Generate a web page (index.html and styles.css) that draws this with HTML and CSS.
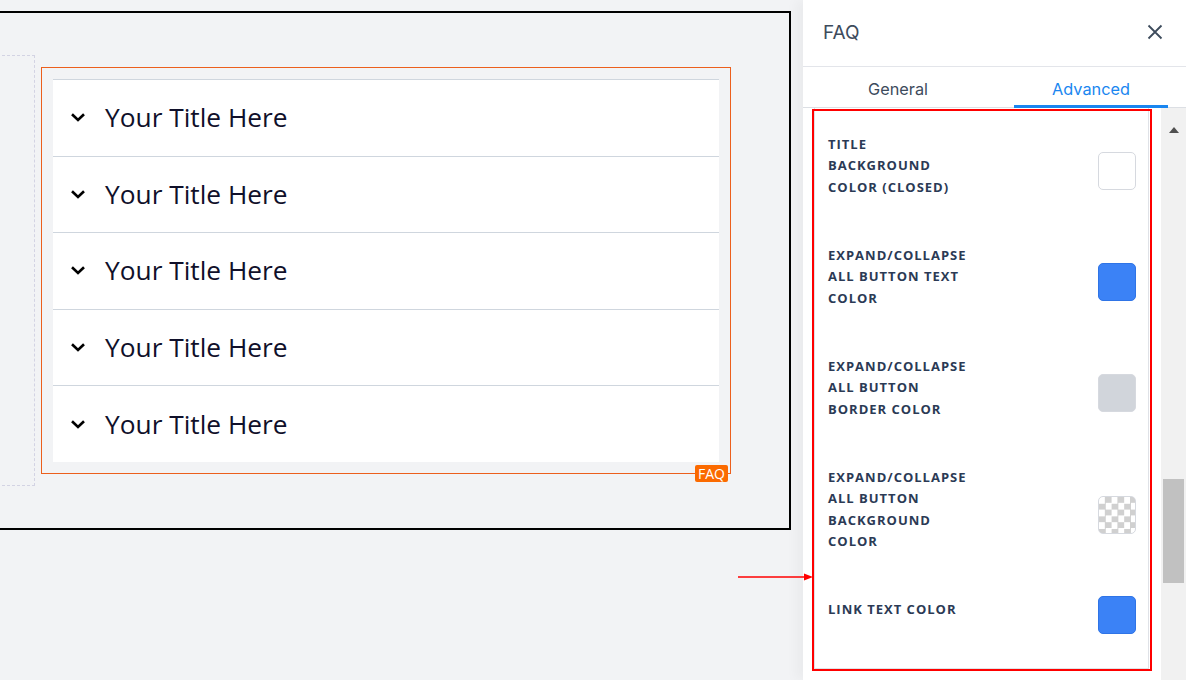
FILE: index.html
```html
<!DOCTYPE html>
<html>
<head>
    <meta charset="UTF-8">
    <title>FAQ - Advanced</title>
    <link rel="stylesheet" href="styles.css">
</head>
<body>
<div class="canvas">
    <div class="frame">
        <div class="ghost"></div>
        <div class="faq-block">
            <ul class="faq">
                <li><em></em><span>Your Title Here</span></li>
                <li><em></em><span>Your Title Here</span></li>
                <li><em></em><span>Your Title Here</span></li>
                <li><em></em><span>Your Title Here</span></li>
                <li><em></em><span>Your Title Here</span></li>
            </ul>
            <i class="tag">FAQ</i>
        </div>
    </div>
</div>

<div class="panel">
    <div class="panel-head">
        <h2>FAQ</h2>
        <svg class="close" width="16" height="16" viewBox="0 0 16 16">
            <path d="M1.5 1.5L14.5 14.5M14.5 1.5L1.5 14.5" stroke="#3d4b5c" stroke-width="1.8" fill="none"/>
        </svg>
    </div>
    <div class="tabs">
        <a class="tab">General</a>
        <a class="tab active">Advanced</a>
    </div>
    <div class="body">
        <div class="scroll">
            <div class="opts">
                <div class="row">
                    <label>Title<br>Background<br>Color (Closed)</label>
                    <b class="swatch white"></b>
                </div>
                <div class="row">
                    <label>Expand/Collapse<br>All Button Text<br>Color</label>
                    <b class="swatch blue"></b>
                </div>
                <div class="row">
                    <label>Expand/Collapse<br>All Button<br>Border Color</label>
                    <b class="swatch gray"></b>
                </div>
                <div class="row">
                    <label>Expand/Collapse<br>All Button<br>Background<br>Color</label>
                    <b class="swatch none"></b>
                </div>
                <div class="row">
                    <label>Link Text Color</label>
                    <b class="swatch blue"></b>
                </div>
            </div>
        </div>
        <div class="bar">
            <s class="up"></s>
            <s class="thumb"></s>
        </div>
    </div>
</div>

<!-- annotation overlay -->
<div class="mark"></div>
<svg class="arrow" width="76" height="10" viewBox="0 0 76 10">
    <path d="M0 5H68" stroke="#ff0000" stroke-width="1.5"/>
    <path d="M66 1.5L75 5L66 8.5Z" fill="#ff0000"/>
</svg>
</body>
</html>
```

FILE: styles.css
```css
* {
    margin: 0;
    padding: 0;
    box-sizing: border-box;
}

ul, li {
    list-style: none;
}

body {
    display: flex;
    height: 680px;
    overflow: hidden;
    background: #f2f3f5;
    font-family: "Open Sans", "Noto Sans", sans-serif;
}

/*左边画布*/
.canvas {
    flex: 1;
    overflow: hidden;
}

.frame {
    display: flex;
    align-items: flex-start;
    margin: 11px 0 0 -20px;
    width: 811px;
    height: 519px;
    border: 2px solid #000;
}

.ghost {
    margin-top: 42px;
    width: 53px;
    height: 431px;
    border: 1px dashed #d3d3e3;
    border-left: 0;
}

.faq-block {
    position: relative;
    margin: 54px 0 0 6px;
    padding: 11px 11px 11px 11px;
    width: 690px;
    height: 407px;
    border: 1px solid #ec5f1c;
}

.faq li {
    display: flex;
    align-items: center;
    height: 76.6px;
    padding-left: 17px;
    background: #fff;
    border-top: 1px solid #cfd6de;
}

.faq em {
    width: 16px;
    height: 10px;
    margin: -1px 19px 0 0;
    background: url("data:image/svg+xml,%3Csvg xmlns='http://www.w3.org/2000/svg' width='16' height='10' viewBox='0 0 16 10'%3E%3Cpath d='M2 2.2L8 8L14 2.2' stroke='%23000' stroke-width='2.6' fill='none'/%3E%3C/svg%3E") no-repeat;
}

.faq span {
    margin-top: -1px;
    font-size: 26.3px;
    color: #10102a;
}

.tag {
    position: absolute;
    right: 2px;
    bottom: -9px;
    padding: 0 3px;
    height: 17px;
    line-height: 17px;
    border-radius: 2px;
    background: #fb6a00;
    color: #fff;
    font-style: normal;
    font-size: 14px;
}

/*右边设置面板*/
.panel {
    display: flex;
    flex-direction: column;
    width: 383px;
    background: #fff;
    box-shadow: -8px 0 10px rgba(0, 0, 0, .03);
    font-family: Inter, "Liberation Sans", sans-serif;
}

.panel-head {
    display: flex;
    align-items: center;
    justify-content: space-between;
    height: 67px;
    padding: 0 23px 2px 20px;
    border-bottom: 1px solid #e3e5ea;
}

.panel-head h2 {
    font-size: 19px;
    font-weight: 400;
    color: #3d4b5c;
}

.tabs {
    display: flex;
    gap: 39px;
    height: 41px;
    padding-left: 18px;
    border-bottom: 1px solid #dcdfe4;
}

.tab {
    width: 154px;
    padding-top: 1px;
    line-height: 42px;
    text-align: center;
    font-size: 16.3px;
    color: #3d4b5c;
}

.tab.active {
    color: #1a86f0;
    border-bottom: 3px solid #1a86f0;
    margin-bottom: -1px;
}

.body {
    flex: 1;
    display: flex;
}

.scroll {
    flex: 1;
    padding: 0 12px 0 11px;
}

.opts {
    height: 561px;
    padding: 2px 12px 0 13px;
    border: 1px solid #dfe2e7;
    border-top: 0;
}

.row {
    display: flex;
    align-items: center;
    justify-content: space-between;
    padding: 23.5px 0 23px;
}

.row label {
    font-family: "Open Sans", sans-serif;
    font-size: 13px;
    font-weight: 700;
    line-height: 21.5px;
    letter-spacing: 1px;
    text-transform: uppercase;
    color: #2b3a55;
}

/*色块不撑高行，只往下偏一点*/
.swatch {
    width: 38px;
    height: 38px;
    margin: -3px 0 -13px;
    border: 1px solid #d6d9df;
    border-radius: 5px;
}

.swatch.white {
    background: #fff;
}

.swatch.blue {
    background: #3b82f6;
    border-color: #2f74e6;
}

.swatch.gray {
    background: #d1d5db;
}

.swatch.none {
    background: repeating-conic-gradient(#d0d0d0 0 25%, #fff 0 50%) 0 0 / 12.6px 12.6px;
}

.bar {
    width: 25px;
    padding: 19px 2px 0;
    background: #f1f1f1;
}

.bar s {
    display: block;
}

.bar .up {
    width: 0;
    height: 0;
    margin: 0 auto;
    border: 5px solid transparent;
    border-top: 0;
    border-bottom: 6px solid #505050;
}

.bar .thumb {
    margin-top: 346px;
    height: 104px;
    background: #c1c1c1;
}

/*标注*/
.mark {
    position: absolute;
    left: 812px;
    top: 109px;
    width: 340px;
    height: 562px;
    border: 2px solid #ff0000;
}

.arrow {
    position: absolute;
    left: 738px;
    top: 572px;
}
```
